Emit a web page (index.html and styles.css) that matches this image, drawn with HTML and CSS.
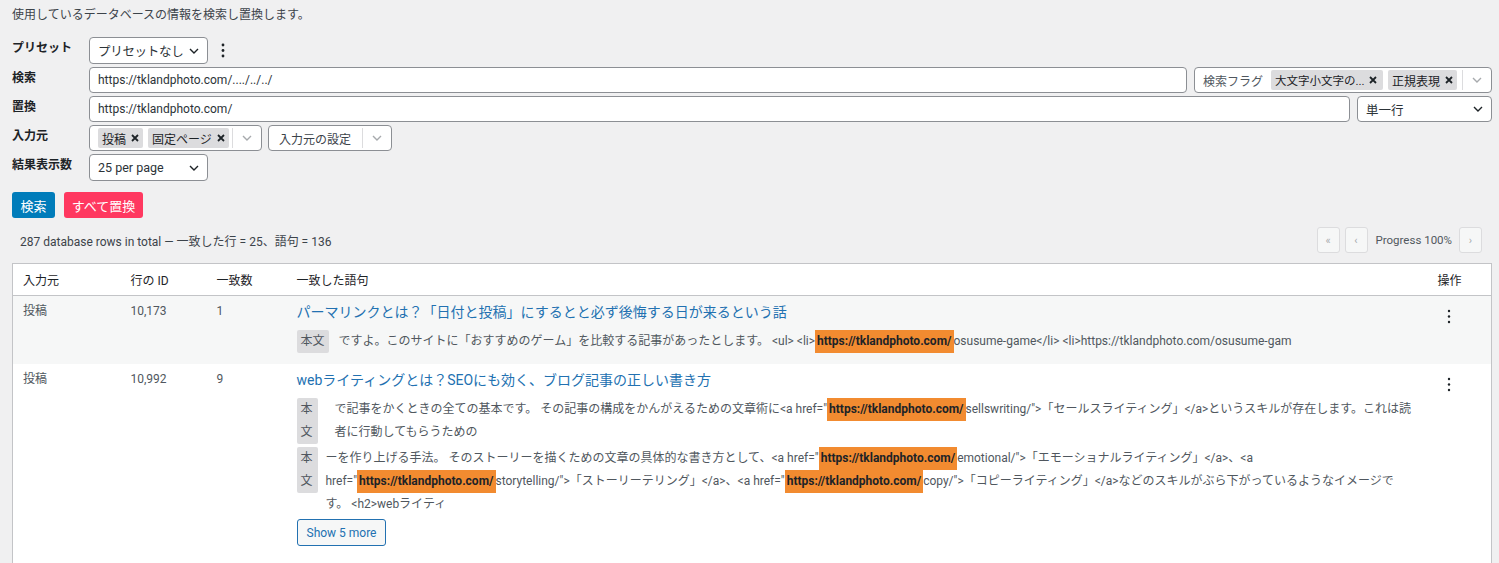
FILE: index.html
```html
<!DOCTYPE html>
<html lang="ja">
<head>
<meta charset="utf-8">
<title>Search Regex</title>
<link rel="stylesheet" href="styles.css">
</head>
<body>
<div class="page">
  <p class="intro">使用しているデータベースの情報を検索し置換します。</p>

  <div class="form">
    <div class="label">プリセット</div>
    <div class="field">
      <div class="control select select-preset tall"><span class="ja">プリセットなし</span><svg class="chev" width="10" height="6" viewBox="0 0 10 6"><path d="M1 1l4 4 4-4" fill="none" stroke="currentColor" stroke-width="1.4"/></svg></div>
      <svg class="kebab" width="6" height="20" viewBox="0 0 6 20"><circle cx="3" cy="4" r="1.4"/><circle cx="3" cy="9.5" r="1.4"/><circle cx="3" cy="15" r="1.4"/></svg>
    </div>

    <div class="label">検索</div>
    <div class="field">
      <div class="control input">https://tklandphoto.com/..../../../</div>
      <div class="control multi flags">
        <div class="values">
          <span class="flag-label">検索フラグ</span>
          <span class="tag tag-trunc"><span class="trunc-text">大文字小文字の...</span><svg class="x" width="8" height="8" viewBox="0 0 8 8"><path d="M1 1l6 6M7 1l-6 6" stroke="currentColor" stroke-width="1.8"/></svg></span>
          <span class="tag">正規表現<svg class="x" width="8" height="8" viewBox="0 0 8 8"><path d="M1 1l6 6M7 1l-6 6" stroke="currentColor" stroke-width="1.8"/></svg></span>
        </div>
        <span class="sep"></span>
        <span class="indicator"><svg width="10" height="6" viewBox="0 0 10 6"><path d="M1 1l4 4 4-4" fill="none" stroke="currentColor" stroke-width="1.4"/></svg></span>
      </div>
    </div>

    <div class="label">置換</div>
    <div class="field">
      <div class="control input">https://tklandphoto.com/</div>
      <div class="control select select-mode"><span>単一行</span><svg class="chev" width="10" height="6" viewBox="0 0 10 6"><path d="M1 1l4 4 4-4" fill="none" stroke="currentColor" stroke-width="1.4"/></svg></div>
    </div>

    <div class="label">入力元</div>
    <div class="field">
      <div class="control multi source">
        <div class="values">
          <span class="tag">投稿<svg class="x" width="8" height="8" viewBox="0 0 8 8"><path d="M1 1l6 6M7 1l-6 6" stroke="currentColor" stroke-width="1.8"/></svg></span>
          <span class="tag">固定ページ<svg class="x" width="8" height="8" viewBox="0 0 8 8"><path d="M1 1l6 6M7 1l-6 6" stroke="currentColor" stroke-width="1.8"/></svg></span>
        </div>
        <span class="sep"></span>
        <span class="indicator"><svg width="10" height="6" viewBox="0 0 10 6"><path d="M1 1l4 4 4-4" fill="none" stroke="currentColor" stroke-width="1.4"/></svg></span>
      </div>
      <div class="control multi source-settings">
        <div class="values"><span class="placeholder">入力元の設定</span></div>
        <span class="sep"></span>
        <span class="indicator"><svg width="10" height="6" viewBox="0 0 10 6"><path d="M1 1l4 4 4-4" fill="none" stroke="currentColor" stroke-width="1.4"/></svg></span>
      </div>
    </div>

    <div class="label">結果表示数</div>
    <div class="field">
      <div class="control select select-preset tall"><span>25 per page</span><svg class="chev" width="10" height="6" viewBox="0 0 10 6"><path d="M1 1l4 4 4-4" fill="none" stroke="currentColor" stroke-width="1.4"/></svg></div>
    </div>
  </div>

  <div class="actions">
    <button class="btn btn-primary">検索</button>
    <button class="btn btn-danger">すべて置換</button>
  </div>

  <div class="summary">
    <span class="summary-text">287 database rows in total — 一致した行 = 25、語句 = 136</span>
    <div class="pager">
      <span class="page-btn">«</span>
      <span class="page-btn">‹</span>
      <span class="progress">Progress 100%</span>
      <span class="page-btn">›</span>
    </div>
  </div>

  <table class="results">
    <colgroup>
      <col class="c-source"><col class="c-id"><col class="c-count"><col class="c-match"><col class="c-op">
    </colgroup>
    <thead>
      <tr><th>入力元</th><th>行の ID</th><th>一致数</th><th>一致した語句</th><th>操作</th></tr>
    </thead>
    <tbody>
      <tr class="alt">
        <td>投稿</td>
        <td>10,173</td>
        <td>1</td>
        <td>
          <div class="title">パーマリンクとは？「日付と投稿」にするとと必ず後悔する日が来るという話</div>
          <div class="ctx">
            <span class="ctx-tag">本文</span>
            <span class="ctx-text gap-a">ですよ。このサイトに「おすすめのゲーム」を比較する記事があったとします。 &lt;ul&gt; &lt;li&gt;<span class="hl">https://tklandphoto.com/</span>osusume-game&lt;/li&gt; &lt;li&gt;https://tklandphoto.com/osusume-gam</span>
          </div>
        </td>
        <td class="op"><svg width="22" height="24" viewBox="0 0 22 24"><circle cx="11" cy="9" r="1.2"/><circle cx="11" cy="14.5" r="1.2"/><circle cx="11" cy="20" r="1.2"/></svg></td>
      </tr>
      <tr class="last">
        <td>投稿</td>
        <td>10,992</td>
        <td>9</td>
        <td>
          <div class="title">webライティングとは？SEOにも効く、ブログ記事の正しい書き方</div>
          <div class="ctx">
            <span class="ctx-tag stacked">本文</span>
            <span class="ctx-text gap-b">で記事をかくときの全ての基本です。 その記事の構成をかんがえるための文章術に&lt;a href="<span class="hl">https://tklandphoto.com/</span>sellswriting/"&gt;「セールスライティング」&lt;/a&gt;というスキルが存在します。これは読<br>者に行動してもらうための</span>
          </div>
          <div class="ctx">
            <span class="ctx-tag stacked">本文</span>
            <span class="ctx-text gap-c">ーを作り上げる手法。 そのストーリーを描くための文章の具体的な書き方として、&lt;a href="<span class="hl">https://tklandphoto.com/</span>emotional/"&gt;「エモーショナルライティング」&lt;/a&gt;、&lt;a<br>href="<span class="hl">https://tklandphoto.com/</span>storytelling/"&gt;「ストーリーテリング」&lt;/a&gt;、&lt;a href="<span class="hl">https://tklandphoto.com/</span>copy/"&gt;「コピーライティング」&lt;/a&gt;などのスキルがぶら下がっているようなイメージで<br>す。 &lt;h2&gt;webライティ</span>
          </div>
          <button class="more">Show 5 more</button>
        </td>
        <td class="op"><svg width="22" height="24" viewBox="0 0 22 24"><circle cx="11" cy="9" r="1.2"/><circle cx="11" cy="14.5" r="1.2"/><circle cx="11" cy="20" r="1.2"/></svg></td>
      </tr>
    </tbody>
  </table>
</div>
</body>
</html>
```

FILE: styles.css
```css
* { box-sizing: border-box; }

body {
  margin: 0;
  background: #f0f0f1;
  color: #1d2327;
  font-family: Roboto, "Noto Sans CJK JP", sans-serif;
  font-size: 12px;
}

.page {
  padding: 6px 7px 0 12px;
}

.intro {
  margin: 0;
  line-height: 18px;
  color: #3c434a;
}

.form {
  margin-top: 13px;
  display: grid;
  grid-template-columns: 77px 1fr;
  row-gap: 3px;
}

.label {
  font-weight: 600;
  line-height: 18px;
  padding-top: 2px;
  color: #1d2327;
}

.field {
  display: flex;
  align-items: center;
  gap: 7px;
}

.control {
  height: 26px;
  border: 1px solid #8c8f94;
  border-radius: 4px;
  background: #fff;
  display: flex;
  align-items: center;
  font-size: 12.5px;
  color: #2c3338;
}

.control.tall { height: 27px; }

.input {
  flex: 1;
  padding: 0 8px;
  font-size: 12px;
}

.select {
  justify-content: space-between;
  padding: 0 8px;
}

.select .ja { font-size: 12.5px; letter-spacing: -0.3px; }

.select-preset { width: 119px; }
.select-mode { width: 135px; }

.chev { color: #1d2327; flex: none; }

.kebab {
  fill: #1d2327;
  margin-left: 5px;
}

.multi {
  padding: 0;
}

.multi .values {
  flex: 1;
  display: flex;
  align-items: center;
  gap: 5px;
  padding-left: 8px;
  min-width: 0;
  white-space: nowrap;
}

.multi .values > * { flex: none; }

.sep {
  width: 1px;
  height: 20px;
  background: #dcdcde;
}

.indicator {
  display: flex;
  align-items: center;
  padding: 0 9px 0 9px;
  color: #a7aaad;
}

.flags { width: 298px; flex: none; }
.source { width: 173px; }
.source-settings { width: 124px; margin-left: -1px; }

.flag-label {
  color: #50575e;
  font-size: 12px;
  margin-right: 3px;
}

.placeholder {
  font-size: 12px;
  color: #3c434a;
  padding-left: 2px;
}

.tag {
  display: inline-flex;
  align-items: center;
  gap: 5px;
  height: 20px;
  padding: 0 4px;
  background: #dcdcde;
  border-radius: 2px;
  font-size: 12px;
  color: #1d2327;
  white-space: nowrap;
}

.tag .x { color: #1d2327; flex: none; }

.tag-trunc {
  width: 112px;
  justify-content: space-between;
  gap: 4px;
  padding-right: 6px;
}

.trunc-text {
  font-size: 11.5px;
  overflow: hidden;
  min-width: 0;
}

.actions {
  margin-top: 11px;
  display: flex;
  gap: 9px;
}

.btn {
  height: 26px;
  border: 0;
  border-radius: 3px;
  color: #fff;
  font-family: inherit;
  font-size: 13px;
  padding: 0 10px;
}

.btn-primary { background: #007cba; width: 43px; padding: 0; }
.btn-danger { background: #ff3860; width: 79px; padding: 0; }

.summary {
  margin-top: 9px;
  height: 26px;
  display: flex;
  align-items: center;
  justify-content: space-between;
}

.summary-text {
  padding-left: 8px;
  color: #3c434a;
}

.pager {
  display: flex;
  align-items: center;
  gap: 5px;
  margin-right: 10px;
}

.page-btn {
  width: 23px;
  height: 26px;
  display: flex;
  align-items: center;
  justify-content: center;
  background: #f6f7f7;
  border: 1px solid #dcdcde;
  border-radius: 3px;
  color: #a7aaad;
  font-size: 11px;
}

.progress {
  margin: 0 2px 0 3px;
  font-size: 11.5px;
  color: #50575e;
}

.results {
  margin-top: 10px;
  width: 100%;
  border-collapse: collapse;
  table-layout: fixed;
  background: #fff;
  border: 1px solid #c3c4c7;
}

.c-source { width: 108px; }
.c-id { width: 86px; }
.c-count { width: 80px; }
.c-op { width: 64px; }

.results th {
  height: 32px;
  padding: 0 10px;
  text-align: left;
  font-weight: 400;
  color: #1d2327;
  border-bottom: 1px solid #c3c4c7;
}

.results td {
  vertical-align: top;
  padding: 6px 10px 8px;
  line-height: 18px;
  color: #50575e;
}

.results tr.alt td { background: #f6f7f7; }
.results tr.last td { padding-bottom: 30px; }

.title {
  font-size: 14px;
  line-height: 20px;
  color: #2271b1;
  margin-bottom: 8px;
}

.ctx {
  display: flex;
  align-items: flex-start;
  line-height: 23px;
  margin-bottom: 3px;
}

.ctx-tag {
  flex: none;
  background: #dcdcde;
  color: #50575e;
  padding: 0 4px;
  border-radius: 2px;
}

.ctx-tag.stacked {
  width: 21px;
  padding: 0 4px;
}

.ctx-text {
  white-space: nowrap;
}

.gap-a { margin-left: 10px; }
.gap-b { margin-left: 17px; }
.gap-c { margin-left: 8px; }

.hl {
  display: inline-block;
  background: #f28b30;
  color: #1d2327;
  font-weight: 700;
  padding: 0 2px;
}

.more {
  margin-top: 0;
  height: 27px;
  padding: 0 9px;
  border: 1px solid #2271b1;
  border-radius: 3px;
  background: #f6f7f7;
  color: #2271b1;
  font-family: inherit;
  font-size: 12px;
}

.op svg { fill: #1d2327; display: block; }
```
